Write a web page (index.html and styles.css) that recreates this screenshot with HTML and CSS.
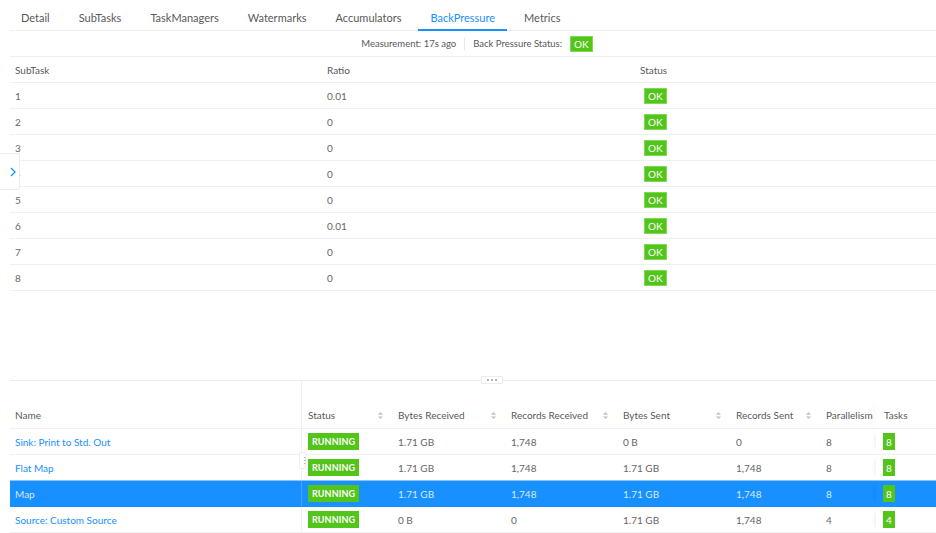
FILE: index.html
```html
<!DOCTYPE html>
<html lang="en">
<head>
<meta charset="utf-8">
<title>Job Vertex - BackPressure</title>
<link rel="stylesheet" href="styles.css">
</head>
<body>
<div class="app">
  <section class="top">
    <nav class="tabs">
      <a class="tab">Detail</a>
      <a class="tab">SubTasks</a>
      <a class="tab">TaskManagers</a>
      <a class="tab">Watermarks</a>
      <a class="tab">Accumulators</a>
      <a class="tab active">BackPressure</a>
      <a class="tab">Metrics</a>
    </nav>

    <div class="measure">
      <span>Measurement: 17s ago</span>
      <span class="sep"></span>
      <span>Back Pressure Status:</span>
      <span class="tag">OK</span>
    </div>

    <div class="bp-table">
      <div class="bp-row head">
        <div class="cell">SubTask</div>
        <div class="cell">Ratio</div>
        <div class="cell">Status</div>
      </div>
      <div class="bp-row"><div class="cell">1</div><div class="cell">0.01</div><div class="cell"><span class="tag ok">OK</span></div></div>
      <div class="bp-row"><div class="cell">2</div><div class="cell">0</div><div class="cell"><span class="tag ok">OK</span></div></div>
      <div class="bp-row"><div class="cell">3</div><div class="cell">0</div><div class="cell"><span class="tag ok">OK</span></div></div>
      <div class="bp-row"><div class="cell">4</div><div class="cell">0</div><div class="cell"><span class="tag ok">OK</span></div></div>
      <div class="bp-row"><div class="cell">5</div><div class="cell">0</div><div class="cell"><span class="tag ok">OK</span></div></div>
      <div class="bp-row"><div class="cell">6</div><div class="cell">0.01</div><div class="cell"><span class="tag ok">OK</span></div></div>
      <div class="bp-row"><div class="cell">7</div><div class="cell">0</div><div class="cell"><span class="tag ok">OK</span></div></div>
      <div class="bp-row"><div class="cell">8</div><div class="cell">0</div><div class="cell"><span class="tag ok">OK</span></div></div>
    </div>
  </section>

  <div class="splitter">
    <span class="split-handle">
      <svg viewBox="0 0 12 4" width="12" height="4"><circle cx="2" cy="2" r="0.9"/><circle cx="6" cy="2" r="0.9"/><circle cx="10" cy="2" r="0.9"/></svg>
    </span>
  </div>

  <section class="bottom">
    <div class="vx-table">
      <div class="vx-row head">
        <div class="cell name">Name</div>
        <div class="cell sortable">Status<svg class="sort" viewBox="0 0 8 10"><path d="M1 4 L4 1 L7 4 Z"/><path d="M1 6 L4 9 L7 6 Z"/></svg></div>
        <div class="cell sortable">Bytes Received<svg class="sort" viewBox="0 0 8 10"><path d="M1 4 L4 1 L7 4 Z"/><path d="M1 6 L4 9 L7 6 Z"/></svg></div>
        <div class="cell sortable">Records Received<svg class="sort" viewBox="0 0 8 10"><path d="M1 4 L4 1 L7 4 Z"/><path d="M1 6 L4 9 L7 6 Z"/></svg></div>
        <div class="cell sortable">Bytes Sent<svg class="sort" viewBox="0 0 8 10"><path d="M1 4 L4 1 L7 4 Z"/><path d="M1 6 L4 9 L7 6 Z"/></svg></div>
        <div class="cell sortable">Records Sent<svg class="sort" viewBox="0 0 8 10"><path d="M1 4 L4 1 L7 4 Z"/><path d="M1 6 L4 9 L7 6 Z"/></svg></div>
        <div class="cell">Parallelism</div>
        <div class="cell tasks">Tasks</div>
      </div>

      <div class="vx-row">
        <div class="cell name"><a class="link">Sink: Print to Std. Out</a></div>
        <div class="cell"><span class="tag run">RUNNING</span></div>
        <div class="cell">1.71 GB</div>
        <div class="cell">1,748</div>
        <div class="cell">0 B</div>
        <div class="cell">0</div>
        <div class="cell">8</div>
        <div class="cell tasks"><span class="tag count">8</span></div>
      </div>
      <div class="vx-row">
        <div class="cell name"><a class="link">Flat Map</a><span class="col-grip">⋮</span></div>
        <div class="cell"><span class="tag run">RUNNING</span></div>
        <div class="cell">1.71 GB</div>
        <div class="cell">1,748</div>
        <div class="cell">1.71 GB</div>
        <div class="cell">1,748</div>
        <div class="cell">8</div>
        <div class="cell tasks"><span class="tag count">8</span></div>
      </div>
      <div class="vx-row selected">
        <div class="cell name"><a class="link">Map</a></div>
        <div class="cell"><span class="tag run">RUNNING</span></div>
        <div class="cell">1.71 GB</div>
        <div class="cell">1,748</div>
        <div class="cell">1.71 GB</div>
        <div class="cell">1,748</div>
        <div class="cell">8</div>
        <div class="cell tasks"><span class="tag count">8</span></div>
      </div>
      <div class="vx-row">
        <div class="cell name"><a class="link">Source: Custom Source</a></div>
        <div class="cell"><span class="tag run">RUNNING</span></div>
        <div class="cell">0 B</div>
        <div class="cell">0</div>
        <div class="cell">1.71 GB</div>
        <div class="cell">1,748</div>
        <div class="cell">4</div>
        <div class="cell tasks"><span class="tag count">4</span></div>
      </div>
    </div>
  </section>

  <button class="collapse" type="button" aria-label="Expand">
    <svg viewBox="0 0 6 10" width="6" height="10"><path d="M1 1 L5 5 L1 9" fill="none" stroke="#1890ff" stroke-width="1.3"/></svg>
  </button>
</div>
</body>
</html>
```

FILE: styles.css
```css
* {
  box-sizing: border-box;
}

html, body {
  margin: 0;
  padding: 0;
  background: #fff;
}

body {
  font-family: Lato, "Noto Sans", "Liberation Sans", sans-serif;
  font-size: 10px;
  color: #595959;
  overflow: hidden;
}

.app {
  position: relative;
  width: 936px;
  height: 533px;
  padding-left: 10px;
  overflow: hidden;
}

/* ---------- upper panel ---------- */
.top {
  height: 380px;
  display: flex;
  flex-direction: column;
}

.tabs {
  display: flex;
  gap: 5px;
  height: 31px;
  border-bottom: 1px solid #efefef;
}

.tab {
  position: relative;
  display: flex;
  align-items: center;
  padding: 5px 12px 0;
  font-size: 11px;
  color: #595959;
  cursor: pointer;
}

.tab:first-child {
  padding-left: 11px;
}

.tab.active {
  color: #1890ff;
}

.tab.active::after {
  content: "";
  position: absolute;
  left: 0;
  right: 0;
  bottom: -1px;
  height: 2px;
  background: #1890ff;
}

.measure {
  display: flex;
  align-items: center;
  justify-content: center;
  gap: 8px;
  height: 26px;
  border-bottom: 1px solid #efefef;
  color: #595959;
  font-size: 9.5px;
  padding-left: 8px;
}

.measure .sep {
  width: 1px;
  height: 12px;
  background: #e8e8e8;
}

.tag {
  display: inline-flex;
  align-items: center;
  justify-content: center;
  height: 16px;
  padding: 0 3px;
  background: #52c41a;
  border: 1px solid #7ed957;
  color: #fff;
  font-size: 10px;
  line-height: 1;
}

.tag.ok {
  margin-left: 4px;
}

.bp-row {
  display: grid;
  grid-template-columns: 312px 313px 1fr;
  height: 26px;
  border-bottom: 1px solid #f0f0f0;
  align-items: center;
}

.bp-row .cell {
  padding-left: 5px;
  color: #666;
}

.bp-row.head .cell {
  color: #595959;
}

/* ---------- splitter ---------- */
.splitter {
  position: relative;
  height: 1px;
  background: #ececec;
}

.split-handle {
  position: absolute;
  left: 471px;
  top: -4px;
  width: 22px;
  height: 8px;
  display: flex;
  align-items: center;
  justify-content: center;
  background: #fff;
  border: 1px solid #ececec;
  fill: #8c8c8c;
}

/* ---------- vertex table ---------- */
.vx-row {
  display: grid;
  grid-template-columns: 292px 90px 113px 112px 113px 90px 56px 60px;
  height: 26px;
  border-bottom: 1px solid #f0f0f0;
}

.vx-row.head {
  height: 48px;
}

.vx-row .cell {
  position: relative;
  display: flex;
  align-items: center;
  padding-left: 6px;
  color: #666;
  white-space: nowrap;
}

.vx-row.head .cell {
  align-items: flex-end;
  padding-bottom: 7px;
  color: #595959;
}

.vx-row .cell.name {
  padding-left: 5px;
  border-right: 1px solid #f0f0f0;
}

.vx-row .cell.tasks {
  padding-left: 7px;
  box-shadow: -5px 0 5px -5px rgba(0, 0, 0, 0.12);
}

.vx-row.head .cell.tasks {
  padding-left: 8px;
  box-shadow: none;
}

.vx-row.head .cell.tasks::before {
  content: "";
  position: absolute;
  left: 0;
  top: 22px;
  bottom: 0;
  width: 1px;
  box-shadow: -2px 0 5px rgba(0, 0, 0, 0.1);
}

.sortable {
  justify-content: space-between;
  padding-right: 8px;
}

.sort {
  width: 7px;
  height: 9px;
  fill: #c4c4c4;
  margin-bottom: 1px;
}

.link {
  color: #1890ff;
  cursor: pointer;
}

.tag.run {
  height: 17px;
  padding: 0 3px;
  font-size: 9px;
  font-weight: 700;
  letter-spacing: 0.1px;
  border-color: #52c41a;
}

.tag.count {
  height: 17px;
  width: 12px;
  padding: 0;
  font-size: 10px;
  border-color: #52c41a;
}

.vx-row.selected {
  background: #1890ff;
  border-top: 1px solid #8cc5ff;
  border-bottom-color: #1890ff;
  margin-top: -1px;
  height: 27px;
}

.vx-row.selected .cell,
.vx-row.selected .link {
  color: #d4e9ff;
}

.vx-row.selected .cell.name {
  border-right-color: #48a6ff;
}

.col-grip {
  position: absolute;
  right: -5px;
  top: -3px;
  width: 7px;
  height: 17px;
  background: #fff;
  border: 1px solid #ececec;
  border-radius: 2px;
  color: #999;
  font-size: 9px;
  line-height: 15px;
  text-align: center;
  z-index: 2;
}

/* ---------- side toggle ---------- */
.collapse {
  position: absolute;
  left: 0;
  top: 153px;
  width: 20px;
  height: 37px;
  padding: 0 0 0 10px;
  display: flex;
  align-items: center;
  justify-content: flex-start;
  background: #fff;
  border: 1px solid #ececec;
  border-left: none;
  border-radius: 0 3px 3px 0;
  cursor: pointer;
}
```
